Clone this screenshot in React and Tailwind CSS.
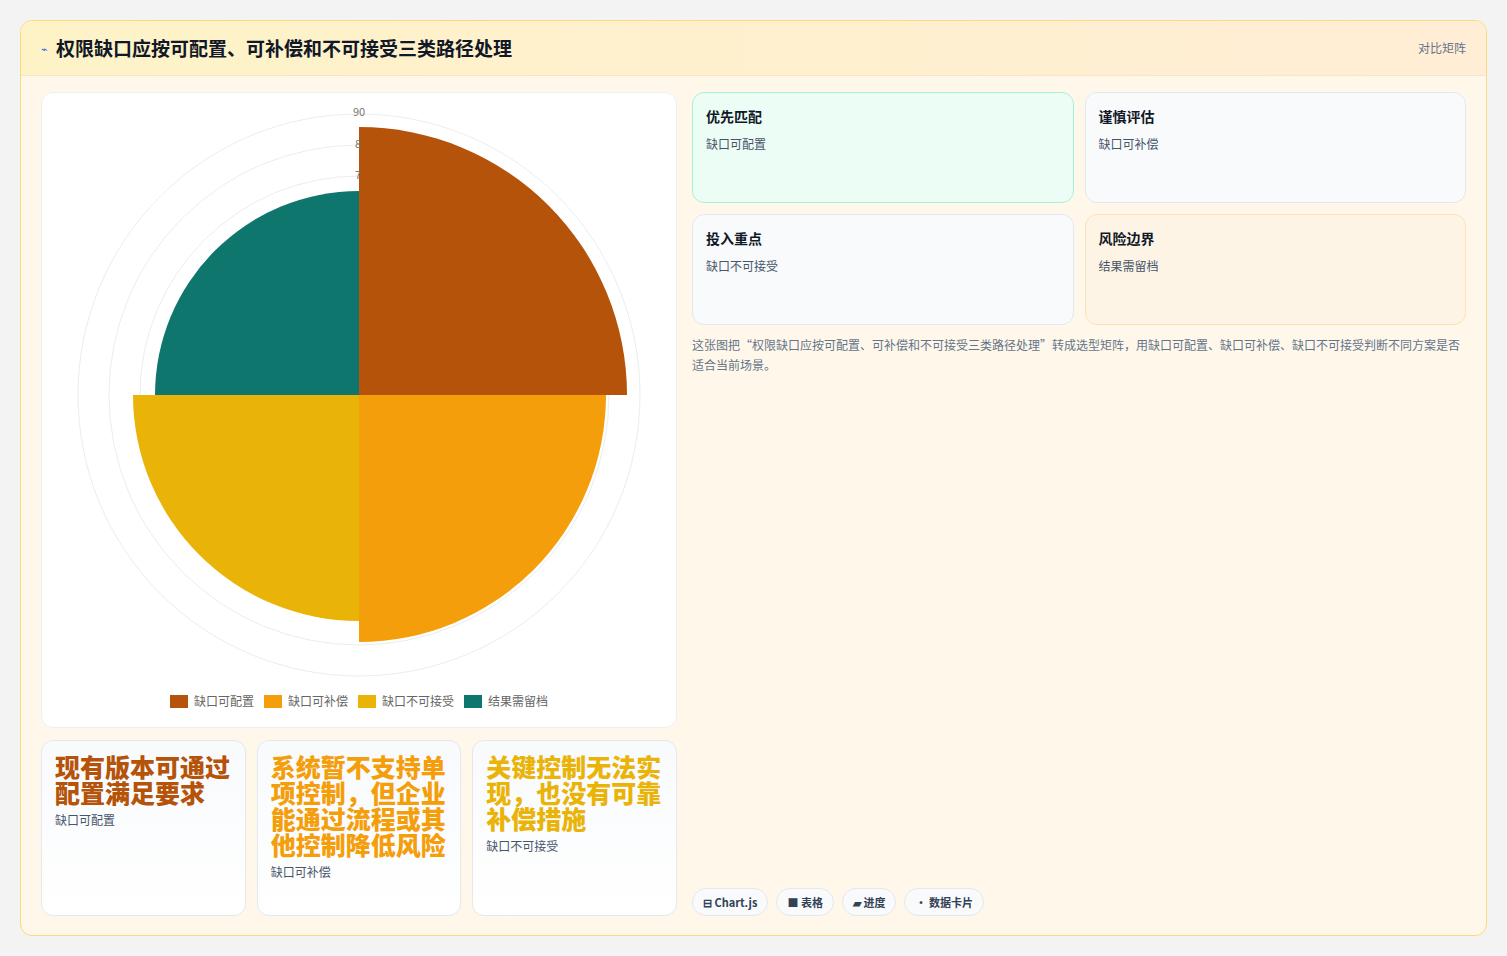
import React from 'react'

const font = { fontFamily: '"Noto Sans CJK SC", "Noto Sans", sans-serif' }

const cx = 318, cy = 302
const wedges = [
  { r: 268, a0: -90, a1: 0, color: '#b45309' },
  { r: 247, a0: 0, a1: 90, color: '#f59e0b' },
  { r: 226, a0: 90, a1: 180, color: '#eab308' },
  { r: 204, a0: 180, a1: 270, color: '#0f766e' },
]

const arc = ({ r, a0, a1 }) => {
  const p = (a) => [cx + r * Math.cos((a * Math.PI) / 180), cy + r * Math.sin((a * Math.PI) / 180)]
  const [x0, y0] = p(a0)
  const [x1, y1] = p(a1)
  return `M${cx} ${cy} L${x0} ${y0} A${r} ${r} 0 0 1 ${x1} ${y1} Z`
}

const legend = [
  ['缺口可配置', 'bg-[#b45309]'],
  ['缺口可补偿', 'bg-[#f59e0b]'],
  ['缺口不可接受', 'bg-[#eab308]'],
  ['结果需留档', 'bg-[#0f766e]'],
]

const bottomCards = [
  ['现有版本可通过配置满足要求', '缺口可配置', 'text-[#b45309]'],
  ['系统暂不支持单项控制，但企业能通过流程或其他控制降低风险', '缺口可补偿', 'text-[#f59e0b]'],
  ['关键控制无法实现，也没有可靠补偿措施', '缺口不可接受', 'text-[#eab308]'],
]

const quads = [
  ['优先匹配', '缺口可配置', 'bg-[#ecfdf5] border-[#a7f3d0]'],
  ['谨慎评估', '缺口可补偿', 'bg-[#f8fafc] border-[#e2e8f0]'],
  ['投入重点', '缺口不可接受', 'bg-[#f8fafc] border-[#e2e8f0]'],
  ['风险边界', '结果需留档', 'bg-[#fdf4e6] border-[#fde2b3]'],
]

const chips = ['⊟ Chart.js', '■ 表格', '▰ 进度', '• 数据卡片']

export default function App() {
  return (
    <div style={font} className="min-h-[956px] bg-[#f3f3f3] px-5 pt-5 pb-5">
      <div className="rounded-xl border border-[#fcd97a] bg-[#fff8ea] overflow-hidden h-[916px] flex flex-col">
        <div className="h-[55px] flex items-center justify-between px-5 bg-gradient-to-r from-[#fef3c7] to-[#ffedd5] border-b border-[#f5e6c4]">
          <div className="flex items-center gap-2">
            <span className="text-[#2563eb] text-[11px]">⌁</span>
            <h1 className="text-[19px] font-bold text-[#111827]">权限缺口应按可配置、可补偿和不可接受三类路径处理</h1>
          </div>
          <span className="text-[12px] text-[#64748b]">对比矩阵</span>
        </div>
        <div className="flex-1 flex gap-[15px] px-5 pt-4 pb-[19px]">
          <div className="w-[636px] flex flex-col gap-3">
            <div className="h-[636px] rounded-xl border border-[#eceff3] bg-white flex flex-col items-center">
              <svg width="636" height="590" className="mt-0">
                {[281, 250, 219, 188, 157].map((r) => (
                  <circle key={r} cx={cx} cy={cy} r={r} fill="none" stroke="#ececec" strokeWidth="1" />
                ))}
                {wedges.map((w, i) => <path key={i} d={arc(w)} fill={w.color} />)}
                <text x={cx} y={23} textAnchor="middle" fontSize="11" fill="#777">90</text>
                <text x={cx - 4} y={55} fontSize="11" fill="#777">8</text>
                <text x={cx - 4} y={86} fontSize="11" fill="#777">7</text>
              </svg>
              <div className="flex gap-[10px] text-[12px] text-[#666] mt-[9px]">
                {legend.map(([t, c]) => (
                  <div key={t} className="flex items-center gap-[6px]">
                    <span className={`w-[18px] h-[13px] ${c}`} />
                    <span>{t}</span>
                  </div>
                ))}
              </div>
            </div>
            <div className="flex-1 grid grid-cols-3 gap-[11px]">
              {bottomCards.map(([t, s, c]) => (
                <div key={s} className="rounded-xl border border-[#e2e8f0] bg-gradient-to-b from-[#f8fafc] to-white px-[13px] pt-3">
                  <div className={`text-[25px] leading-[26px] font-black ${c}`}>{t}</div>
                  <div className="text-[12px] text-[#475569] mt-[6px]">{s}</div>
                </div>
              ))}
            </div>
          </div>
          <div className="flex-1 flex flex-col">
            <div className="grid grid-cols-2 gap-[11px]">
              {quads.map(([t, s, c]) => (
                <div key={t} className={`h-[111px] rounded-xl border px-[13px] pt-[13px] ${c}`}>
                  <div className="text-[14px] font-bold text-[#111827]">{t}</div>
                  <div className="text-[12px] text-[#475569] mt-[8px]">{s}</div>
                </div>
              ))}
            </div>
            <p className="text-[12px] leading-[20px] text-[#64748b] mt-[10px]">
              这张图把“权限缺口应按可配置、可补偿和不可接受三类路径处理”转成选型矩阵，用缺口可配置、缺口可补偿、缺口不可接受判断不同方案是否适合当前场景。
            </p>
            <div className="mt-auto flex gap-2">
              {chips.map((c) => (
                <span key={c} className="rounded-full border border-[#e5e7eb] bg-[#f8fafc] px-[10px] h-[28px] flex items-center text-[11px] font-bold text-[#334155]">{c}</span>
              ))}
            </div>
          </div>
        </div>
      </div>
    </div>
  )
}
